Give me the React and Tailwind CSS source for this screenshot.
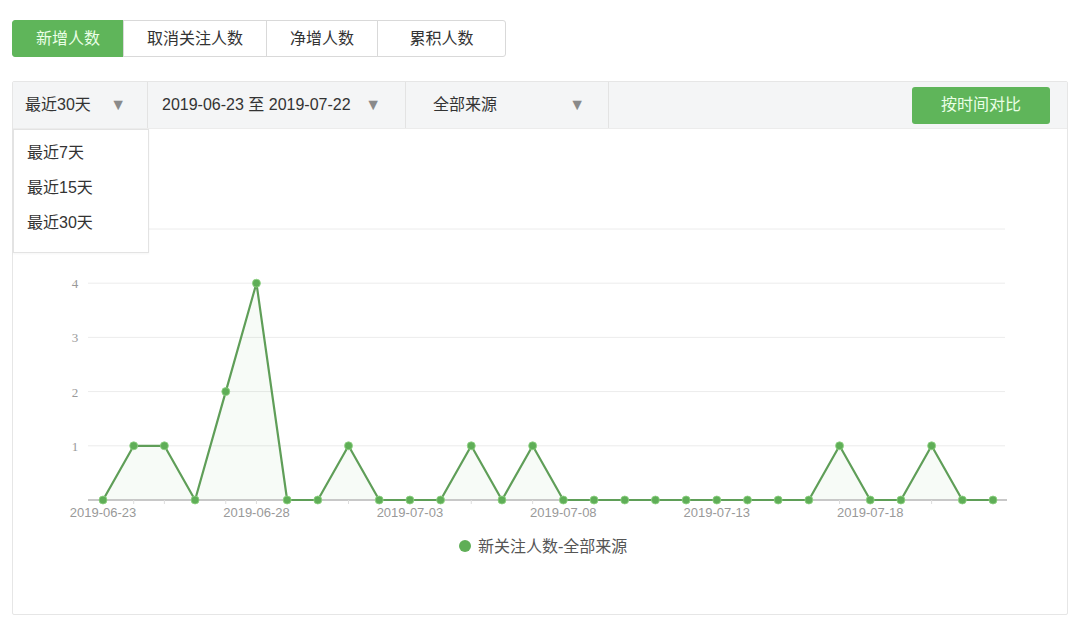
import React from 'react';

const tabs = ['新增人数', '取消关注人数', '净增人数', '累积人数'];
const tabWidths = ['w-[112px]', 'w-[144px]', 'w-[112px]', 'w-[129px]'];

const values = [0, 1, 1, 0, 2, 4, 0, 0, 1, 0, 0, 0, 1, 0, 1, 0, 0, 0, 0, 0, 0, 0, 0, 0, 1, 0, 0, 1, 0, 0];
const labels = ['2019-06-23', '2019-06-28', '2019-07-03', '2019-07-08', '2019-07-13', '2019-07-18'];

const X0 = 103;
const STEP = (993 - 103) / 29;
const Y0 = 500;
const UNIT = 54.2;

const px = (i) => X0 + i * STEP;
const py = (v) => Y0 - v * UNIT;

const Chart = () => {
  const line = values.map((v, i) => `${i === 0 ? 'M' : 'L'}${px(i)},${py(v)}`).join(' ');
  const area = `${line} L${px(29)},${Y0} L${px(0)},${Y0} Z`;
  return (
    <svg width="1054" height="486" viewBox="13 129 1054 486" className="block">
      {[1, 2, 3, 4, 5].map((v) => (
        <line key={v} x1="88" x2="1005" y1={py(v)} y2={py(v)} stroke="#ececec" strokeWidth="1" />
      ))}
      {[1, 2, 3, 4].map((v) => (
        <text key={v} x="75" y={py(v) + 5} fontSize="13" fill="#999" textAnchor="middle" fontFamily="'Liberation Serif', serif">
          {v}
        </text>
      ))}
      <path d={area} fill="#5fb55a" fillOpacity="0.05" />
      <line x1="88" x2="1007" y1={Y0} y2={Y0} stroke="#c8c8c8" strokeWidth="2" />
      {values.map((_, i) => (
        <line key={i} x1={px(i)} x2={px(i)} y1={Y0} y2={Y0 + 4} stroke="#ddd" strokeWidth="1" />
      ))}
      <path d={line} fill="none" stroke="#5f9e58" strokeWidth="2.2" strokeLinejoin="round" />
      {values.map((v, i) => (
        <circle key={i} cx={px(i)} cy={py(v)} r="4" fill="#5fae57" stroke="#8fd383" strokeWidth="0.8" />
      ))}
      {labels.map((l, i) => (
        <text key={l} x={px(i * 5)} y="517" fontSize="13" fill="#999" textAnchor="middle" fontFamily="'Liberation Sans', sans-serif">
          {l}
        </text>
      ))}
      <circle cx="465" cy="546" r="6" fill="#5fae57" />
      <text x="478" y="552" fontSize="16" fill="#555" fontFamily="'Liberation Serif', 'Noto Sans CJK SC', serif">
        新关注人数-全部来源
      </text>
    </svg>
  );
};

const Caret = () => <span className="text-[16px] text-[#8a8a8a] leading-none">▼</span>;

const App = () => {
  return (
    <div className="w-[1080px] h-[625px] bg-white overflow-hidden font-['Liberation_Sans','Noto_Sans_CJK_SC',sans-serif] text-[#333]">
      <div className="pt-[20px] pl-[12px] flex">
        {tabs.map((t, i) => (
          <div
            key={t}
            className={`${tabWidths[i]} h-[37px] flex items-center justify-center text-[16px] border ${
              i === 0
                ? 'bg-[#5fb55a] border-[#5fb55a] text-[#eaffe6] rounded-l-[3px]'
                : 'bg-white border-[#d9d9d9] text-[#333] -ml-px'
            } ${i === 3 ? 'rounded-r-[3px]' : ''}`}
          >
            {t}
          </div>
        ))}
      </div>

      <div className="mt-[24px] ml-[12px] w-[1056px] h-[534px] border border-[#e6e6e6] rounded-[2px] relative">
        <div className="h-[47px] bg-[#f4f5f6] flex items-center border-b border-[#ececec]">
          <div className="w-[135px] h-full flex items-center justify-between pl-[12px] pr-[21px] border-r border-[#e3e3e3] text-[16px]">
            <span>最近30天</span>
            <Caret />
          </div>
          <div className="w-[258px] h-full flex items-center justify-between pl-[14px] pr-[24px] border-r border-[#e3e3e3] text-[16px]">
            <span>2019-06-23 至 2019-07-22</span>
            <Caret />
          </div>
          <div className="w-[203px] h-full flex items-center justify-between pl-[27px] pr-[23px] border-r border-[#e3e3e3] text-[16px]">
            <span>全部来源</span>
            <Caret />
          </div>
          <div className="flex-1 h-full flex items-center justify-end pr-[17px]">
            <button className="w-[138px] h-[37px] rounded-[3px] bg-[#5fb55a] text-[#eaffe6] text-[16px]">按时间对比</button>
          </div>
        </div>

        <Chart />

        <div className="absolute left-0 top-[47px] w-[136px] h-[124px] bg-white border border-[#e3e3e3] shadow-[0_1px_2px_rgba(0,0,0,0.04)] flex flex-col pl-[13px] pt-[12px] gap-[13px] text-[16px]">
          <span className="leading-[22px]">最近7天</span>
          <span className="leading-[22px]">最近15天</span>
          <span className="leading-[22px]">最近30天</span>
        </div>
      </div>
    </div>
  );
};

export default App;
